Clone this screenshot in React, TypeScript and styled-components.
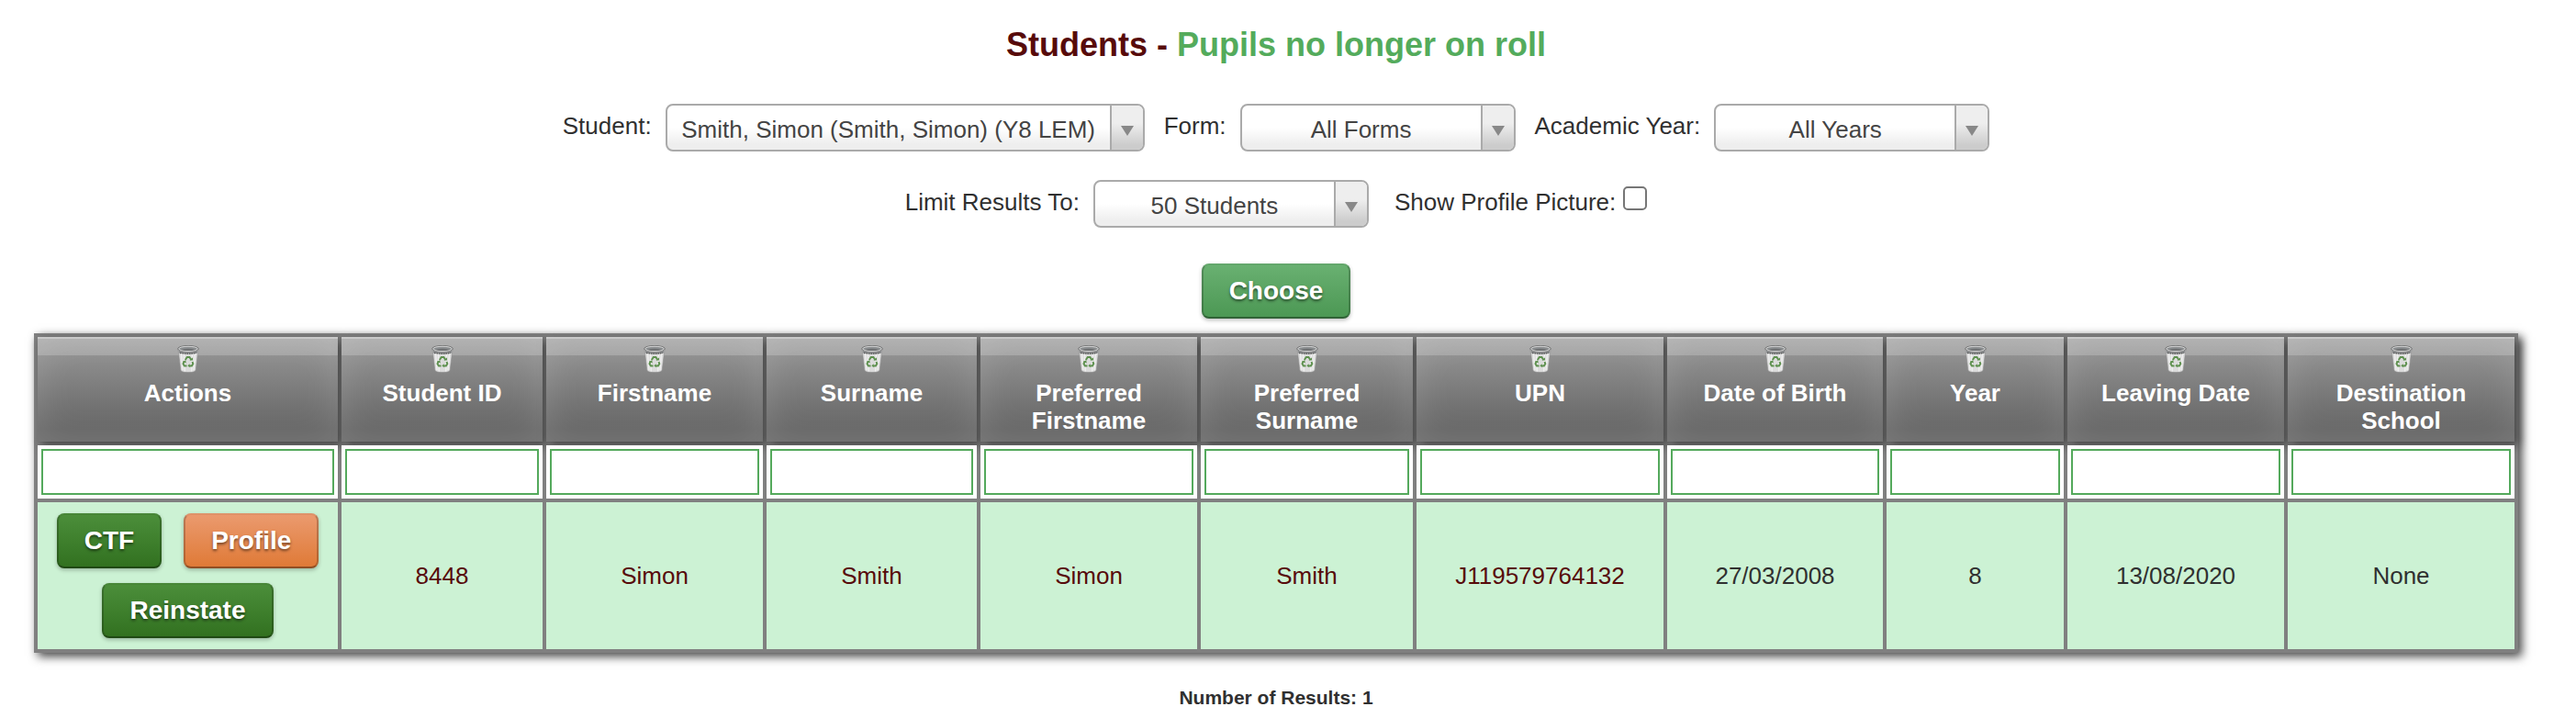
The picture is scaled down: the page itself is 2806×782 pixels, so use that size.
import React from 'react';
import styled, { createGlobalStyle, css } from 'styled-components';

const Global = createGlobalStyle`
  * { box-sizing: border-box; }
  body { margin: 0; background: #fff; color: #303030; font: 26px/30px "Liberation Sans", Arial, sans-serif; }
`;

const Page = styled.main`
  display: flex;
  flex-direction: column;
  align-items: center;
  padding: 27px 63px 0 37px;
`;

const Title = styled.h1`
  margin: 0;
  font-size: 36px;
  line-height: 44px;
  color: #570b0b;
`;

const TitleAccent = styled.span`
  color: #54ab5c;
`;

const Filters = styled.form`
  display: flex;
  flex-direction: column;
  align-items: center;
  padding-top: 42px;
`;

const FilterRow = styled.div<{ $gap: number }>`
  display: flex;
  justify-content: center;
  gap: ${({ $gap }) => $gap}px;
  min-height: 83px;
`;

const FilterActions = styled.div`
  padding-top: 8px;
`;

const Field = styled.label<{ $gap?: number }>`
  display: flex;
  align-items: flex-start;
  gap: ${({ $gap = 15 }) => $gap}px;
`;

const FieldText = styled.span`
  padding-top: 9px;
`;

const SelectFrame = styled.span<{ $width: number }>`
  position: relative;
  display: flex;
  width: ${({ $width }) => $width}px;
  height: 52px;
  border: 2px solid #aaa;
  border-radius: 8px;
  overflow: hidden;
  background: linear-gradient(#fff 50%, #eee 88%);
`;

const Select = styled.select`
  appearance: none;
  flex: 1;
  min-width: 0;
  padding: 4px 38px 0 2px;
  border: 0;
  background: transparent;
  color: #444;
  font: inherit;
  text-align: center;
  text-align-last: center;
`;

const SelectArrow = styled.span`
  position: absolute;
  inset: 0 0 0 auto;
  display: flex;
  align-items: center;
  justify-content: center;
  width: 36px;
  padding-top: 6px;
  border-left: 2px solid #aaa;
  background: linear-gradient(#eee 40%, #ccc 90%);
  pointer-events: none;
`;

const Checkbox = styled.input`
  appearance: none;
  width: 26px;
  height: 26px;
  margin: 7px 0 0;
  border: 2px solid #767676;
  border-radius: 5px;
  background: #fff;
`;

const tones = {
  light: css`background-image: linear-gradient(#6ab172, #4b9753);`,
  green: css`background-image: linear-gradient(#4c8f3b, #31701f);`,
  orange: css`background-image: linear-gradient(#eb9b70, #df7935);`,
};

const Button = styled.button<{ $tone: keyof typeof tones }>`
  display: block;
  height: 60px;
  padding: 0 28px;
  border: 2px solid rgba(0, 0, 0, 0.2);
  border-top-color: rgba(0, 0, 0, 0.05);
  border-bottom-color: rgba(0, 0, 0, 0.35);
  border-radius: 8px;
  background-origin: border-box;
  ${({ $tone }) => tones[$tone]}
  box-shadow: 0 2px 4px rgba(0, 0, 0, 0.25);
  color: #fff;
  font: bold 28px/32px "Liberation Sans", Arial, sans-serif;
  text-shadow: 0 2px 3px rgba(0, 0, 0, 0.5);
`;

const Results = styled.table`
  width: 100%;
  margin-top: 16px;
  table-layout: fixed;
  border-collapse: separate;
  border-spacing: 4px;
  background: #808080;
  box-shadow: 4px 4px 10px #444;
  text-align: center;
`;

const Col = styled.col<{ $width: number }>`
  width: ${({ $width }) => $width}px;
`;

const HeadCell = styled.th`
  height: 114px;
  padding: 9px 8px 8px;
  vertical-align: top;
  background: linear-gradient(#999, #666 88%);
  box-shadow:
    4px 4px 10px #444,
    inset 0 2px rgba(255, 255, 255, 0.3),
    inset 0 20px rgba(255, 255, 255, 0.2),
    inset 0 0 40px rgba(255, 255, 255, 0.15);
  color: #fff;
`;

const HeadLabel = styled.div`
  max-width: 170px;
  margin: 0 auto;
`;

const FilterCell = styled.td`
  height: 58px;
  padding: 4px;
  background: #fff;
`;

const ColumnFilter = styled.input`
  display: block;
  width: 100%;
  height: 50px;
  padding: 0 8px;
  border: 2px solid #54a95c;
  background: #fff;
  font: inherit;
`;

const Cell = styled.td`
  height: 160px;
  padding: 0 8px;
  background: #ccf2d4;
`;

const Actions = styled.div`
  display: flex;
  flex-wrap: wrap;
  justify-content: center;
  gap: 16px 24px;
`;

const RecordLink = styled.a`
  color: #570b0b;
  text-decoration: none;
`;

const Count = styled.p`
  margin: 36px 0 0;
  font-size: 21px;
  line-height: 26px;
  font-weight: bold;
`;

const BinIcon = styled.svg`
  display: block;
  width: 24px;
  height: 30px;
  margin: 0 auto 7px;
`;

function Bin() {
  return (
    <BinIcon viewBox="0 0 24 30" aria-hidden="true">
      <path d="M1 4l2.800 23q.2 2.500 8.200 2.500t8.200-2.500L23 4z" fill="#dcdcdc" stroke="#8c8c8c" strokeWidth="0.6" />
      <path d="M4.500 9l1.500 18M7.500 10l.8 18.500M19.500 9l-1.500 18M16.500 10l-.8 18.500" stroke="#efefef" strokeWidth="1.400" />
      <path d="M1.500 5.500Q12 10 22.500 5.500L22 8.500Q12 10.500 2 8.500z" fill="#8d8f91" />
      <path d="M3 8.300q9 1.800 18 0" fill="none" stroke="#4f4f4f" strokeWidth="1.200" strokeDasharray="1.500 1" />
      <ellipse cx="12" cy="3.800" rx="11.300" ry="3.400" fill="#8f9294" stroke="#686868" strokeWidth="0.800" />
      <ellipse cx="12" cy="3.900" rx="10.200" ry="2.600" fill="#8b8e90" stroke="#dcdcdc" strokeWidth="0.900" />
      <path d="M4 4.800q8-2 16 0-8 2.400-16 0z" fill="#707274" />
      <g fill="none" stroke="#5f9150" strokeWidth="2">
        <path d="M8.800 16l2-3h2.600l2 3" />
        <path d="M16.500 18l.8 2.200-1.400 2.200h-3" />
        <path d="M7.600 17.500L6.500 20.200l1.400 2.200h2.600" />
      </g>
      <path d="M13.500 16.500h3.500v-3.300zM13.600 20.300v4l-2.200-2zM6 18l3.200-1.800.6 3.200z" fill="#5f9150" />
    </BinIcon>
  );
}

function Picker({ label, value, width }: { label: string; value: string; width: number }) {
  return (
    <Field>
      <FieldText>{label}</FieldText>
      <SelectFrame $width={width}>
        <Select defaultValue={value}>
          <option>{value}</option>
        </Select>
        <SelectArrow>
          <svg width="14" height="12" viewBox="0 0 14 12" aria-hidden="true">
            <path d="M0 1h14L7 12z" fill="#888" />
          </svg>
        </SelectArrow>
      </SelectFrame>
    </Field>
  );
}

const columns = [
  { name: 'Actions', width: 327 },
  { name: 'Student ID', width: 219, value: '8448', link: true },
  { name: 'Firstname', width: 236, value: 'Simon', link: true },
  { name: 'Surname', width: 229, value: 'Smith', link: true },
  { name: 'Preferred Firstname', width: 236, value: 'Simon', link: true },
  { name: 'Preferred Surname', width: 231, value: 'Smith', link: true },
  { name: 'UPN', width: 269, value: 'J119579764132', link: true },
  { name: 'Date of Birth', width: 235, value: '27/03/2008' },
  { name: 'Year', width: 193, value: '8' },
  { name: 'Leaving Date', width: 236, value: '13/08/2020' },
  { name: 'Destination School', width: 247, value: 'None' },
];

export default function App() {
  return (
    <Page>
      <Global />
      <Title>
        Students - <TitleAccent>Pupils no longer on roll</TitleAccent>
      </Title>
      <Filters onSubmit={(e) => e.preventDefault()}>
        <FilterRow $gap={21}>
          <Picker label="Student:" value="Smith, Simon (Smith, Simon) (Y8 LEM)" width={522} />
          <Picker label="Form:" value="All Forms" width={300} />
          <Picker label="Academic Year:" value="All Years" width={300} />
        </FilterRow>
        <FilterRow $gap={28}>
          <Picker label="Limit Results To:" value="50 Students" width={300} />
          <Field $gap={8}>
            <FieldText>Show Profile Picture:</FieldText>
            <Checkbox type="checkbox" />
          </Field>
        </FilterRow>
        <FilterActions>
          <Button $tone="light">Choose</Button>
        </FilterActions>
      </Filters>
      <Results>
        <colgroup>
          {columns.map((c) => (
            <Col key={c.name} $width={c.width} />
          ))}
        </colgroup>
        <thead>
          <tr>
            {columns.map((c) => (
              <HeadCell key={c.name} scope="col">
                <Bin />
                <HeadLabel>{c.name}</HeadLabel>
              </HeadCell>
            ))}
          </tr>
        </thead>
        <tbody>
          <tr>
            {columns.map((c) => (
              <FilterCell key={c.name}>
                <ColumnFilter type="text" aria-label={c.name} />
              </FilterCell>
            ))}
          </tr>
          <tr>
            {columns.map((c) => (
              <Cell key={c.name}>
                {!c.value && (
                  <Actions>
                    <Button type="button" $tone="green">CTF</Button>
                    <Button type="button" $tone="orange">Profile</Button>
                    <Button type="button" $tone="green">Reinstate</Button>
                  </Actions>
                )}
                {c.link ? <RecordLink href="#">{c.value}</RecordLink> : c.value}
              </Cell>
            ))}
          </tr>
        </tbody>
      </Results>
      <Count>Number of Results: 1</Count>
    </Page>
  );
}
